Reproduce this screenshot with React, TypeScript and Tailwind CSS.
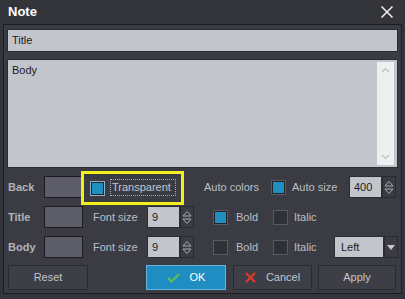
import React from "react";

const Check = ({ checked, focused }: { checked?: boolean; focused?: boolean }) => (
  <div
    className={`w-[15px] h-[15px] shrink-0 border p-[1px] ${
      focused ? "border-[#8fb0c4]" : "border-[#585a63]"
    } ${checked ? "bg-[#24252b]" : "bg-[#303137]"}`}
  >
    {checked && <div className="w-full h-full bg-[#1f8fc2]" />}
  </div>
);

const SpinArrows = () => (
  <div className="w-[14px] h-[22px] shrink-0 flex items-center justify-center bg-[#3b3c43] border border-[#2a2b30]">
    <svg width="10" height="15" viewBox="0 0 10 15">
      <path d="M1 6 L5 1.5 L9 6 Z" fill="none" stroke="#a8aab0" strokeWidth="1" />
      <path d="M1 9 L5 13.5 L9 9 Z" fill="none" stroke="#a8aab0" strokeWidth="1" />
    </svg>
  </div>
);

const Spin = ({ value }: { value: string }) => (
  <div className="flex shrink-0">
    <div className="w-[33px] h-[22px] bg-[#c3c5cc] border border-[#2c2d33] flex items-center pl-[4px] text-[#1b1b1e]">
      {value}
    </div>
    <SpinArrows />
  </div>
);

const Swatch = () => (
  <div className="w-[39px] h-[22px] shrink-0 bg-[#5c5d68] border border-[#1b1b20]" />
);

const Label = ({ children }: { children: React.ReactNode }) => (
  <div className="w-[36px] shrink-0 font-bold text-[#b2b3b9]">{children}</div>
);

const Button = ({
  children,
  primary,
  className = "",
}: {
  children: React.ReactNode;
  primary?: boolean;
  className?: string;
}) => (
  <div
    className={`h-[25px] shrink-0 flex items-center justify-center gap-[10px] border ${
      primary
        ? "bg-[#1f8dc1] border-[#5fb7df] text-white"
        : "bg-[#3d3e46] border-[#2a2b30] text-[#c4c5cb]"
    } ${className}`}
  >
    {children}
  </div>
);

export default function App() {
  return (
    <div className="relative w-[405px] h-[299px] bg-[#34353b] overflow-hidden font-['Liberation_Sans',Arial,sans-serif] text-[11px] text-[#bdbec4]">
      {/* title bar */}
      <div className="h-[24px] flex items-center justify-between pl-[8px] pr-[12px]">
        <span className="text-white font-bold text-[13px]">Note</span>
        <svg width="12" height="12" viewBox="0 0 12 12">
          <path d="M0.5 0.5 L11.5 11.5 M11.5 0.5 L0.5 11.5" stroke="#f2f2f4" strokeWidth="1.5" />
        </svg>
      </div>

      <div className="mx-[3px] h-[270px] border border-[#1c1d21] bg-[#3b3c43] flex flex-col px-[3px] pt-[4px]">
        {/* title field */}
        <div className="h-[23px] bg-[#c3c5cc] border border-[#2c2d33] flex items-center pl-[4px] text-[#1b1b1e]">
          Title
        </div>

        {/* body field */}
        <div className="mt-[7px] h-[109px] bg-[#c3c5cc] border border-[#2c2d33] flex justify-between pl-[4px] pr-[3px] pt-[2px] text-[#1b1b1e]">
          <span>Body</span>
          <div className="w-[17px] h-[103px] bg-[#eeeff1] flex flex-col items-center justify-between py-[5px]">
            <svg width="9" height="6" viewBox="0 0 9 6">
              <path d="M1 5 L4.5 1.5 L8 5" fill="none" stroke="#c2c4c8" strokeWidth="1.5" />
            </svg>
            <svg width="9" height="6" viewBox="0 0 9 6">
              <path d="M1 1 L4.5 4.5 L8 1" fill="none" stroke="#c2c4c8" strokeWidth="1.5" />
            </svg>
          </div>
        </div>

        {/* back row */}
        <div className="mt-[8px] h-[22px] flex items-center pl-[1px]">
          <Label>Back</Label>
          <Swatch />
          <div className="ml-[7px] mt-[2px]">
            <Check checked focused />
          </div>
          <div className="ml-[5px] w-[66px] h-[17px] shrink-0 border border-dotted border-[#9fb0bc] flex items-center pl-[1px] text-[#c3c4ca]">
            Transparent
          </div>
          <div className="ml-[28px] w-[67px] shrink-0">Auto colors</div>
          <Check checked />
          <div className="ml-[6px] w-[57px] shrink-0">Auto size</div>
          <Spin value="400" />
        </div>

        {/* title row */}
        <div className="mt-[8px] h-[22px] flex items-center pl-[1px]">
          <Label>Title</Label>
          <Swatch />
          <div className="ml-[10px] w-[54px] shrink-0">Font size</div>
          <Spin value="9" />
          <div className="ml-[19px]">
            <Check checked />
          </div>
          <div className="ml-[8px] w-[37px] shrink-0">Bold</div>
          <Check />
          <div className="ml-[6px] w-[40px] shrink-0">Italic</div>
        </div>

        {/* body row */}
        <div className="mt-[8px] h-[22px] flex items-center pl-[1px]">
          <Label>Body</Label>
          <Swatch />
          <div className="ml-[10px] w-[54px] shrink-0">Font size</div>
          <Spin value="9" />
          <div className="ml-[19px]">
            <Check />
          </div>
          <div className="ml-[8px] w-[37px] shrink-0">Bold</div>
          <Check />
          <div className="ml-[6px] w-[40px] shrink-0">Italic</div>
          <div className="flex shrink-0">
            <div className="w-[50px] h-[22px] bg-[#c3c5cc] border border-[#2c2d33] flex items-center pl-[6px] text-[#1b1b1e]">
              Left
            </div>
            <div className="w-[14px] h-[22px] flex items-center justify-center bg-[#3b3c43] border border-[#2a2b30]">
              <svg width="8" height="5" viewBox="0 0 8 5">
                <path d="M0 0 L8 0 L4 5 Z" fill="#c6c7cc" />
              </svg>
            </div>
          </div>
        </div>

        {/* buttons */}
        <div className="mt-[7px] flex pl-[1px]">
          <Button className="w-[80px]">Reset</Button>
          <Button primary className="ml-[58px] w-[80px]">
            <svg width="13" height="10" viewBox="0 0 13 10">
              <path d="M1 5 L4.5 8.5 L12 1" fill="none" stroke="#5cc24f" strokeWidth="2" />
            </svg>
            <span>OK</span>
          </Button>
          <Button className="ml-[7px] w-[79px]">
            <svg width="11" height="11" viewBox="0 0 11 11">
              <path d="M1 1 L10 10 M10 1 L1 10" stroke="#e2392b" strokeWidth="2.2" />
            </svg>
            <span>Cancel</span>
          </Button>
          <Button className="ml-[6px] w-[78px]">Apply</Button>
        </div>
      </div>

      {/* yellow highlight annotation */}
      <div className="absolute left-[81px] top-[171px] w-[103px] h-[34px] border-[3px] border-[#f4ee1c]" />
    </div>
  );
}
